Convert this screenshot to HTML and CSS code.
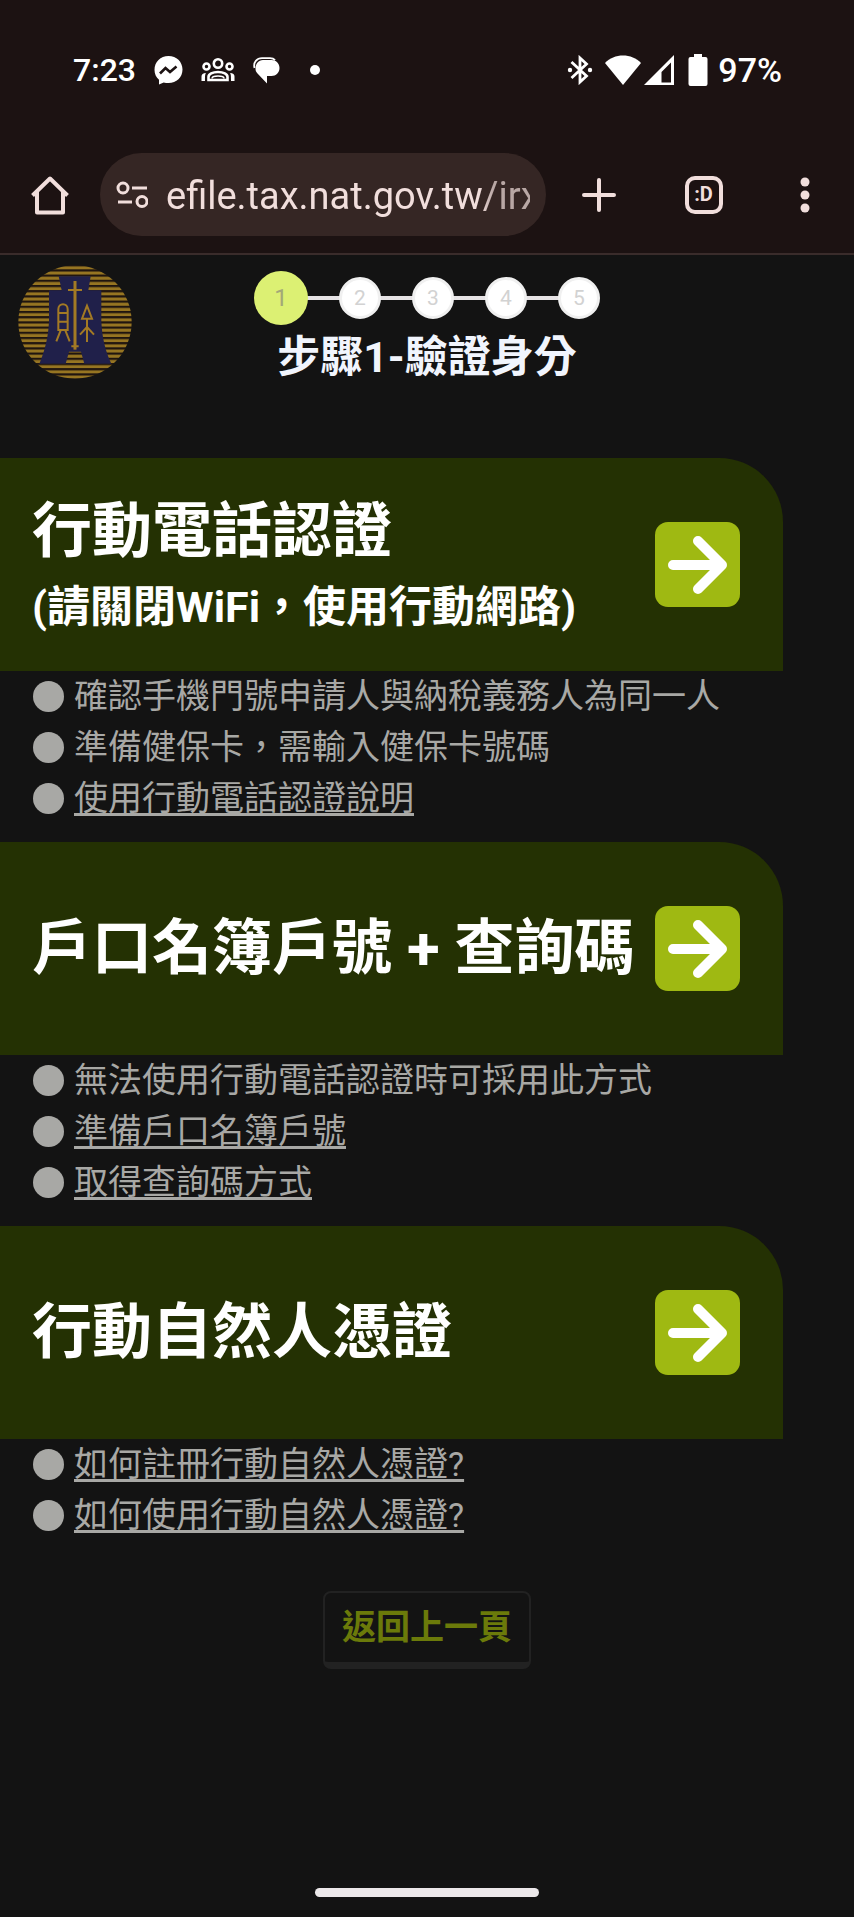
FILE: index.html
```
<!DOCTYPE html>
<html lang="zh-Hant">
<head>
  <meta charset="UTF-8" />
  <meta name="viewport" content="width=device-width, initial-scale=1.0"/>
  <title>步驟1-驗證身分</title>
  <link rel="stylesheet" href="styles.css">
</head>
<body>
  <div class="status-bar">
    <span class="clock">7:23</span>
    <svg class="icon-messenger" width="29" height="29" viewBox="0 0 29 29">
      <path fill="#fff" d="M14.5 0C6.500 0 .5 5.900.5 13.800c0 4.100 1.700 7.600 4.500 10V28.500l4.700-2.100c1.500.5 3.100.7 4.800.7 8 0 14-5.700 14-13.500S22.500 0 14.500 0z"/>
      <path fill="none" stroke="#1c1212" stroke-width="2.600" d="M6 17.500l5.500-5.500 4.500 4 6.500-5.500"/>
    </svg>
    <svg class="icon-group" width="34" height="24" viewBox="0 0 34 24" fill="none" stroke="#fff" stroke-width="2.600">
      <circle cx="17" cy="5.500" r="4.200"/>
      <circle cx="5.500" cy="8.500" r="3"/>
      <circle cx="28.500" cy="8.500" r="3"/>
      <path d="M7.500 22v-3c0-3 4-5 9.500-5s9.500 2 9.500 5v3z"/>
      <path d="M11 20.500c0-2 2-2.500 6-2.500s6 .5 6 2.500" stroke-width="1.500"/>
      <path fill="#fff" stroke="none" d="M.5 23v-4.500c0-2 1.500-3.500 4.500-3.500-1 1.500-1 3-1 8zM33.500 23v-4.500c0-2-1.500-3.500-4.500-3.500 1 1.500 1 3 1 8z"/>
    </svg>
    <svg class="icon-chat" width="27" height="27" viewBox="0 0 27 27">
      <path fill="none" stroke="#fff" stroke-width="1.800" d="M1.500 11C0 5 4 1.200 9 1.200h8c2.500 0 4 .8 5 2"/>
      <path fill="#fff" d="M10 3h8.500c4.500 0 8 3.500 8 8s-3.500 8-8 8h-4.500v7.500L4.500 16.500c-1.500-1.500-2-3-2-5C2.500 7 5.500 3 10 3z"/>
    </svg>
    <span class="more-dot"></span>

    <div class="status-right">
      <svg width="26" height="30" viewBox="0 0 26 30">
        <path fill="none" stroke="#fff" stroke-width="2.800" d="M4.500 7l15 14-6.500 6V3l6.500 6-15 14"/>
        <circle fill="#fff" cx="3" cy="15" r="2.200"/>
        <circle fill="#fff" cx="23" cy="15" r="2.200"/>
      </svg>
      <svg class="icon-wifi" width="36" height="30" viewBox="0 0 36 30">
        <path fill="#fff" d="M0 8C9-2 27-2 36 8L18 30z"/>
      </svg>
      <svg class="icon-signal" width="30" height="30" viewBox="0 0 30 30">
        <path fill="#fff" fill-rule="evenodd" d="M0 30L30 0v30zM17.500 17v10.500H27V7.500z"/>
      </svg>
      <svg class="icon-battery" width="20" height="32" viewBox="0 0 20 32">
        <path fill="#fff" d="M6 0h8v3h3.500a2 2 0 0 1 2 2v25a2 2 0 0 1-2 2h-15a2 2 0 0 1-2-2V5a2 2 0 0 1 2-2H6z"/>
      </svg>
      <span class="battery-level">97%</span>
    </div>
  </div>

  <div class="toolbar">
    <button type="button" class="tool home" aria-label="首頁">
      <svg width="38" height="40" viewBox="0 0 38 40" fill="none" stroke="#f1dedc" stroke-width="4">
        <path d="M1.500 20.500L19 3.500l17.500 17M6 17v20.500h26V17" stroke-linejoin="round"/>
      </svg>
    </button>
    <div class="address">
      <svg width="32" height="28" viewBox="0 0 32 28" fill="none" stroke="#f1dedc" stroke-width="3">
        <circle cx="7" cy="7" r="5"/>
        <circle cx="26" cy="20.500" r="5"/>
        <path d="M16 7h15M2 21h14"/>
      </svg>
      <input type="text" aria-label="網址" value="efile.tax.nat.gov.tw/irxw">
    </div>
    <button type="button" class="tool" aria-label="新增分頁">
      <svg width="34" height="34" viewBox="0 0 34 34" fill="none" stroke="#f1dedc" stroke-width="4" stroke-linecap="round">
        <path d="M17 2v30M2 17h30"/>
      </svg>
    </button>
    <button type="button" class="tool" aria-label="分頁"><span class="tab-count">:D</span></button>
    <button type="button" class="tool menu" aria-label="選單">
      <svg width="10" height="36" viewBox="0 0 10 36" fill="#f1dedc">
        <circle cx="5" cy="5" r="4.500"/>
        <circle cx="5" cy="18" r="4.500"/>
        <circle cx="5" cy="31" r="4.500"/>
      </svg>
    </button>
  </div>

  <header class="page-header">
    <svg class="logo" width="114" height="114" viewBox="0 0 342 342">
      <defs>
        <pattern id="stripes" width="342" height="15.600" patternUnits="userSpaceOnUse">
          <rect width="342" height="15.600" fill="#20150f"/>
          <rect width="342" height="9" y="4" fill="#967522"/>
        </pattern>
      </defs>
      <circle cx="171" cy="171" r="170" fill="url(#stripes)"/>
      <path fill="#20204a" d="M122 34h96l-7 42h39v92c2 50 12 90 30 128H64c16-38 27-78 29-128V76h38z"/>
      <path fill="url(#stripes)" d="M153 260h36l10 36h-56z"/>
      <g fill="none" stroke="#a37a24" stroke-width="6">
        <path d="M171 48v206" stroke-width="9"/>
        <path d="M150 75h42M160 244h22"/>
        <path d="M121 195v-62c0-20 28-20 28 0v62zM121 144h28M121 170h28M128 196l-13 33M142 196l13 33"/>
        <path d="M207 122l-15 39h30zM207 161v70M186 209l21-23 21 23"/>
      </g>
    </svg>
    <div class="progress">
      <ol class="steps">
        <li class="step active">1</li>
        <li class="step">2</li>
        <li class="step">3</li>
        <li class="step">4</li>
        <li class="step">5</li>
      </ol>
      <h1>步驟1-驗證身分</h1>
    </div>
  </header>

  <main>
    <section class="method">
      <div class="card">
        <h2>行動電話認證 <small>(請關閉WiFi，使用行動網路)</small></h2>
        <button type="button" class="go" aria-label="行動電話認證">
          <svg width="60" height="60" viewBox="0 0 60 60"><path d="M5 30h46M30 6l24 24-24 24"/></svg>
        </button>
      </div>
      <ul class="notes">
        <li>確認手機門號申請人與納稅義務人為同一人</li>
        <li>準備健保卡，需輸入健保卡號碼</li>
        <li><a href="#">使用行動電話認證說明</a></li>
      </ul>
    </section>

    <section class="method">
      <div class="card">
        <h2>戶口名簿戶號 + 查詢碼</h2>
        <button type="button" class="go" aria-label="戶口名簿戶號 + 查詢碼">
          <svg width="60" height="60" viewBox="0 0 60 60"><path d="M5 30h46M30 6l24 24-24 24"/></svg>
        </button>
      </div>
      <ul class="notes">
        <li>無法使用行動電話認證時可採用此方式</li>
        <li><a href="#">準備戶口名簿戶號</a></li>
        <li><a href="#">取得查詢碼方式</a></li>
      </ul>
    </section>

    <section class="method">
      <div class="card">
        <h2>行動自然人憑證</h2>
        <button type="button" class="go" aria-label="行動自然人憑證">
          <svg width="60" height="60" viewBox="0 0 60 60"><path d="M5 30h46M30 6l24 24-24 24"/></svg>
        </button>
      </div>
      <ul class="notes">
        <li><a href="#">如何註冊行動自然人憑證?</a></li>
        <li><a href="#">如何使用行動自然人憑證?</a></li>
      </ul>
    </section>

    <button type="button" class="back">返回上一頁</button>
  </main>

  <div class="home-indicator"></div>
</body>
</html>
```
FILE: styles.css
```
* {
  box-sizing: border-box;
}
body {
  margin: 0;
  min-height: 100vh;
  display: flex;
  flex-direction: column;
  background: #131313;
  color: #a8a8a5;
  font-family: Roboto, "Noto Sans CJK TC", sans-serif;
}
button {
  padding: 0;
  border: none;
  background: none;
  font-family: inherit;
  cursor: pointer;
}
svg {
  display: block;
  flex-shrink: 0;
}

/* phone status bar */
.status-bar {
  display: flex;
  align-items: center;
  padding: 50px 72px 63px 73px;
  background: #1c1212;
  color: #fff;
  font-size: 34px;
  font-weight: 500;
  line-height: 40px;
}
.clock {
  font-size: 32px;
}
.icon-messenger {
  margin-left: 18px;
}
.icon-group,
.icon-chat {
  margin-left: 18px;
}
.more-dot {
  width: 10px;
  height: 10px;
  margin-left: 30px;
  border-radius: 50%;
  background: #fff;
}
.status-right {
  display: flex;
  align-items: center;
  margin-left: auto;
}
.icon-wifi {
  margin-left: 12px;
}
.icon-signal {
  margin-left: 3px;
}
.icon-battery {
  margin-left: 14px;
}
.battery-level {
  margin-left: 10px;
}

/* browser toolbar */
.toolbar {
  display: flex;
  align-items: center;
  padding-bottom: 17px;
  background: #1c1212;
  border-bottom: 2px solid #3a2c2b;
}
.tool {
  display: flex;
  align-items: center;
  justify-content: center;
  width: 105px;
  height: 83px;
}
.tool.home {
  width: 100px;
}
.tool.menu {
  width: 98px;
}
.address {
  flex: 1;
  min-width: 0;
  display: flex;
  align-items: center;
  gap: 18px;
  height: 83px;
  padding: 0 16px;
  border-radius: 42px;
  background: #352624;
}
.address input {
  flex: 1;
  min-width: 0;
  padding: 2px 0 0;
  border: none;
  outline: none;
  background: none;
  color: #f1dedc;
  font-family: inherit;
  font-size: 38px;
  line-height: 48px;
  -webkit-mask-image: linear-gradient(to right, #000 86%, rgba(0, 0, 0, 0.7) 90%);
  mask-image: linear-gradient(to right, #000 86%, rgba(0, 0, 0, 0.7) 90%);
}
.tab-count {
  width: 38px;
  height: 38px;
  border: 4px solid #f1dedc;
  border-radius: 10px;
  color: #f1dedc;
  font-size: 20px;
  font-weight: 700;
  line-height: 29px;
  text-align: center;
}

/* logo and steps */
.page-header {
  display: grid;
  grid-template-columns: 1fr auto 1fr;
  align-items: start;
  padding: 10px 18px 0;
  margin-bottom: 71px;
}
.progress {
  padding-top: 6px;
}
.steps {
  display: flex;
  align-items: center;
  justify-content: center;
  gap: 31px;
  margin: 0;
  padding: 0;
  list-style: none;
  /* line that joins the circles */
  background: linear-gradient(#e6e3e5, #e6e3e5) center / 90% 4px no-repeat;
}
.step {
  display: flex;
  align-items: center;
  justify-content: center;
  width: 42px;
  height: 42px;
  border: 3px solid #f0f0f0;
  border-radius: 50%;
  background: #fff;
  color: #d2d2d2;
  font-size: 21px;
}
.step.active {
  width: 54px;
  height: 54px;
  border: none;
  background: #dcf073;
  color: #a3a878;
  font-size: 24px;
}
.page-header h1 {
  margin: 2px 0 0;
  color: #f1f5fd;
  font-size: 43px;
  line-height: 60px;
  text-align: center;
}

/* login methods */
.card {
  display: flex;
  align-items: center;
  justify-content: space-between;
  min-height: 213px;
  margin-right: 71px;
  padding: 0 43px 0 32px;
  border-radius: 0 64px 0 0;
  background: #243103;
}
.card h2 {
  margin: 0;
  color: #fff;
  font-size: 60px;
  line-height: 84px;
  white-space: nowrap;
}
.card small {
  display: block;
  font-size: 43px;
  line-height: 66px;
}
.go {
  display: flex;
  align-items: center;
  justify-content: center;
  flex-shrink: 0;
  width: 85px;
  height: 85px;
  border-radius: 13px;
  background: #9fb912;
}
.go path {
  fill: none;
  stroke: #fff;
  stroke-width: 10;
  stroke-linecap: round;
  stroke-linejoin: round;
}
.notes {
  margin: 0;
  padding: 0 33px 18px;
  list-style: none;
  font-size: 34px;
  line-height: 51px;
}
.notes li {
  display: flex;
  align-items: center;
  gap: 10px;
}
.notes li::before {
  content: "";
  width: 31px;
  height: 31px;
  border-radius: 50%;
  background: #a8a8a5;
}
.notes a {
  color: inherit;
  text-decoration: underline;
  text-decoration-thickness: 3px;
  text-underline-offset: 3px;
  text-decoration-skip-ink: none;
}

.back {
  display: block;
  margin: 32px auto 0;
  padding: 10px 17px;
  border: 2px solid #222;
  border-bottom-width: 7px;
  border-radius: 8px;
  color: #6b7a0a;
  font-size: 34px;
  font-weight: 700;
  line-height: 49px;
}

.home-indicator {
  width: 224px;
  height: 9px;
  margin: auto auto 20px;
  border-radius: 5px;
  background: #ece8ea;
}
```
